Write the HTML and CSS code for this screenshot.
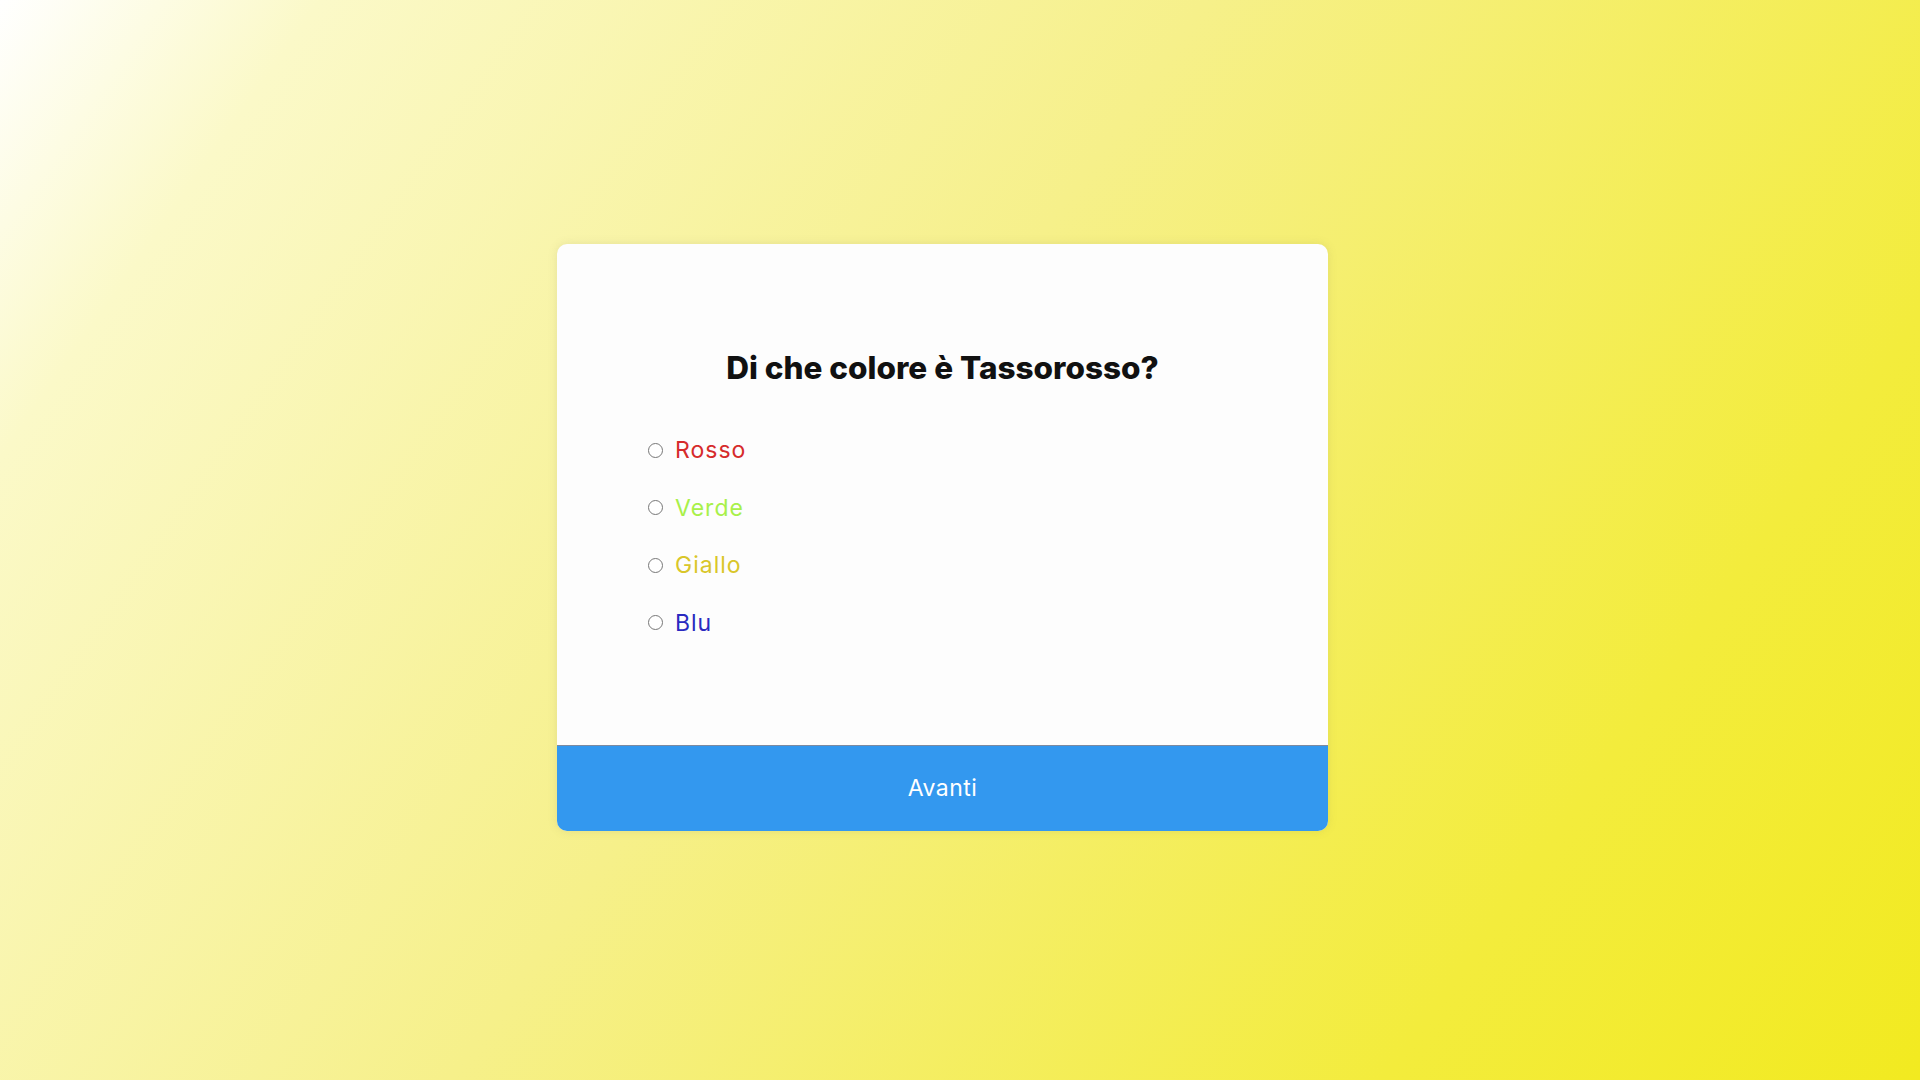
FILE: index.html
```html
<!DOCTYPE html>
<html lang="it">
<head>
<meta charset="utf-8">
<title>Quiz</title>
<link rel="stylesheet" href="styles.css">
</head>
<body>
<div class="quiz">
  <div class="quiz-body">
    <h2 class="question">Di che colore è Tassorosso?</h2>
    <ul class="answers">
      <li class="answer"><input type="radio" name="a" id="a1"><label for="a1" class="rosso">Rosso</label></li>
      <li class="answer"><input type="radio" name="a" id="a2"><label for="a2" class="verde">Verde</label></li>
      <li class="answer"><input type="radio" name="a" id="a3"><label for="a3" class="giallo">Giallo</label></li>
      <li class="answer"><input type="radio" name="a" id="a4"><label for="a4" class="blu">Blu</label></li>
    </ul>
  </div>
  <button class="next">Avanti</button>
</div>
</body>
</html>
```
FILE: styles.css
```css
* { box-sizing: border-box; }
html, body { height: 100%; }
body {
  margin: 0;
  font-family: "Inter", "Open Sans", sans-serif;
  background: linear-gradient(125deg, #ffffff 0%, #fbf9c8 12%, #f6f08a 45%, #f3ec3c 80%, #f2ea20 100%);
  display: flex;
  align-items: center;
  justify-content: center;
}
.quiz {
  width: 771px;
  margin-right: 35px;
  margin-top: -6px;
  background: #fdfdfd;
  border-radius: 10px;
  box-shadow: 0 0 10px rgba(120, 120, 80, 0.15);
  overflow: hidden;
  display: flex;
  flex-direction: column;
}
.quiz-body {
  height: 501px;
  padding: 106px 0 0 0;
}
.question {
  margin: 0;
  text-align: center;
  font-size: 31.5px;
  line-height: 36px;
  font-weight: 800;
  color: #111;
  letter-spacing: 0;
}
.answers {
  list-style: none;
  margin: 36px 0 0 0;
  padding: 0 0 0 91px;
}
.answer {
  height: 57.5px;
  display: flex;
  align-items: center;
}
.answer input {
  width: 15px;
  height: 15px;
  margin: 0 12px 0 0;
}
.answer label {
  font-size: 23px;
  letter-spacing: 1px;
}
.rosso { color: #d62b2b; }
.verde { color: #a8f04a; }
.giallo { color: #d9c62a; }
.blu { color: #2a2ac0; }
.next {
  height: 86px;
  border: none;
  border-top: 1px solid #7d8aa0;
  background: #3398ef;
  color: #ffffff;
  font-family: "Inter", "Open Sans", sans-serif;
  font-size: 23px;
  letter-spacing: 0.5px;
  cursor: pointer;
}
```
